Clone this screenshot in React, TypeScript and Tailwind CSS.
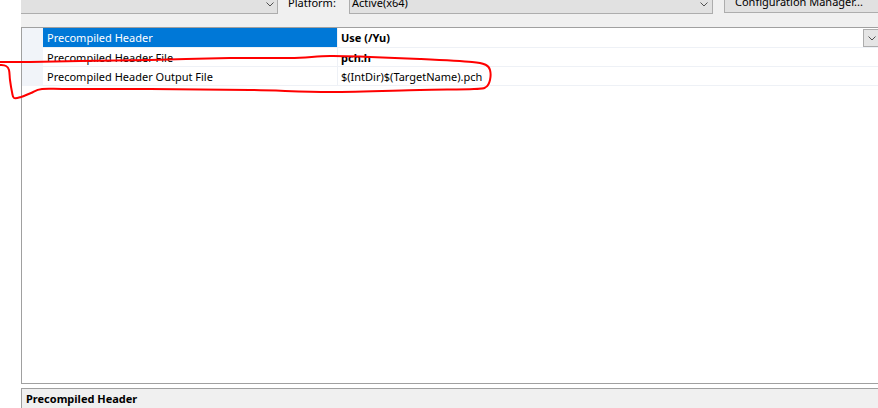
import React from "react";

type Row = { name: string; value: string; bold?: boolean; selected?: boolean; dropdown?: boolean };

const rows: Row[] = [
  { name: "Precompiled Header", value: "Use (/Yu)", bold: true, selected: true, dropdown: true },
  { name: "Precompiled Header File", value: "pch.h", bold: true },
  { name: "Precompiled Header Output File", value: "$(IntDir)$(TargetName).pch" },
];

// Hand-drawn highlight loop around the output file row
const markPoints: [number, number][] = [
  [0, 65], [6, 66], [9, 70], [10, 80], [12, 92], [14, 98], [21, 97], [31, 93], [42, 89],
  [70, 89], [150, 89], [250, 90], [330, 92], [420, 90], [474, 89], [486, 87], [490, 80],
  [490, 70], [486, 65], [472, 62], [420, 59], [370, 57], [330, 56], [290, 58], [230, 58],
  [150, 60], [80, 61], [30, 62], [0, 62],
];

function smoothPath(pts: [number, number][]): string {
  let d = `M ${pts[0][0]} ${pts[0][1]}`;
  for (let i = 0; i < pts.length - 1; i++) {
    const p0 = pts[i - 1] ?? pts[i];
    const p1 = pts[i];
    const p2 = pts[i + 1];
    const p3 = pts[i + 2] ?? p2;
    const c1x = p1[0] + (p2[0] - p0[0]) / 6;
    const c1y = p1[1] + (p2[1] - p0[1]) / 6;
    const c2x = p2[0] - (p3[0] - p1[0]) / 6;
    const c2y = p2[1] - (p3[1] - p1[1]) / 6;
    d += ` C ${c1x} ${c1y} ${c2x} ${c2y} ${p2[0]} ${p2[1]}`;
  }
  return d;
}

function Chevron() {
  return (
    <svg width="8" height="5" viewBox="0 0 8 5" className="block">
      <path d="M0.5 0.5 L4 4 L7.5 0.5" fill="none" stroke="#505050" strokeWidth="1" />
    </svg>
  );
}

export default function App() {
  return (
    <div className="relative w-[878px] h-[408px] overflow-hidden bg-white flex font-['Noto_Sans',sans-serif] text-[11px] leading-[15px] text-black">
      <div className="w-[21px] shrink-0 bg-white" />
      <div className="flex-1 min-w-0 flex flex-col bg-[#f0f0f0]">
        {/* Configuration / platform toolbar */}
        <div className="h-[27px] shrink-0 flex items-start">
          <div className="w-[257px] h-[14px] shrink-0 bg-[#e1e1e1] border-r border-b border-[#adadad] flex justify-end items-start pt-[1.5px] pr-[3px]">
            <Chevron />
          </div>
          <div className="ml-[10px] w-[61px] shrink-0 -mt-[5px] whitespace-nowrap">Platform:</div>
          <div className="w-[364px] h-[14px] shrink-0 bg-[#e1e1e1] border-l border-r border-b border-[#adadad] flex justify-between items-start pl-[2px] pr-[4px]">
            <span className="-mt-[5px] whitespace-nowrap">Active(x64)</span>
            <span className="pt-[1.5px]">
              <Chevron />
            </span>
          </div>
          <div className="ml-[11px] w-[170px] h-[13px] shrink-0 bg-[#e1e1e1] border-l border-r border-b border-[#adadad] pl-[10px]">
            <span className="block -mt-[6px] whitespace-nowrap">Configuration Manager...</span>
          </div>
        </div>

        {/* Property grid */}
        <div className="h-[357px] shrink-0 bg-white border-t border-l border-b border-[#a0a0a0] flex flex-col">
          {rows.map((r, i) => (
            <div key={r.name} className={`flex shrink-0 ${i === 0 ? "h-[20px]" : "h-[19px]"}`}>
              <div className="w-[21px] shrink-0 bg-[#f1f4f9]" />
              <div className="flex-1 flex border-b border-[#eef1f6]">
                <div
                  className={`w-[294px] shrink-0 flex items-center pl-[4px] whitespace-nowrap ${
                    r.selected ? "bg-[#0078d7] text-white" : ""
                  }`}
                >
                  {r.name}
                </div>
                <div className="flex-1 flex items-center border-l border-[#eef1f6] pl-[3px]">
                  <span className={`whitespace-nowrap ${r.bold ? "font-bold" : ""}`}>{r.value}</span>
                  {r.dropdown && (
                    <div className="ml-auto self-end w-[15px] h-[18px] bg-[#e5e5e5] border-l border-t border-b border-[#adadad] flex items-center justify-center pl-[1px]">
                      <Chevron />
                    </div>
                  )}
                </div>
              </div>
            </div>
          ))}
        </div>

        <div className="h-[4px] shrink-0 bg-white" />

        {/* Description pane */}
        <div className="flex-1 border-t border-l border-[#a0a0a0] bg-[#f0f0f0] pl-[4px] pt-[2px]">
          <span className="font-bold whitespace-nowrap">Precompiled Header</span>
        </div>
      </div>

      <svg className="absolute inset-0 pointer-events-none" width="878" height="408" viewBox="0 0 878 408">
        <path
          d={smoothPath(markPoints)}
          fill="none"
          stroke="#ff0000"
          strokeWidth="2"
          strokeLinecap="round"
          strokeLinejoin="round"
        />
      </svg>
    </div>
  );
}
